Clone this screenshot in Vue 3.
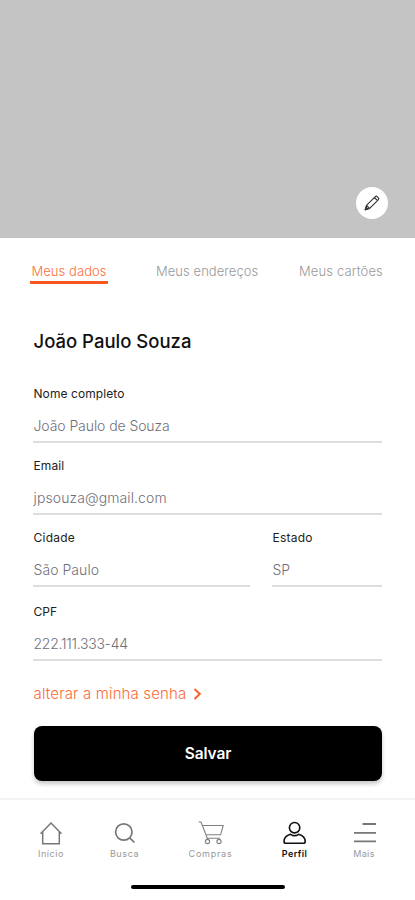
<script setup>
const tabs = [
  { label: 'Meus dados', key: 'dados', active: true },
  { label: 'Meus endereços', key: 'enderecos' },
  { label: 'Meus cartões', key: 'cartoes' },
]

const fields = [
  { key: 'nome', label: 'Nome completo', value: 'João Paulo de Souza' },
  { key: 'email', label: 'Email', value: 'jpsouza@gmail.com' },
  { key: 'cidade', label: 'Cidade', value: 'São Paulo' },
  { key: 'estado', label: 'Estado', value: 'SP' },
  { key: 'cpf', label: 'CPF', value: '222.111.333-44' },
]
</script>

<template>
  <main class="screen">
    <header class="cover">
      <button class="edit" aria-label="Editar foto">
        <svg width="18" height="18" viewBox="0 0 18 18" fill="none" stroke="#333" stroke-width="1.15" stroke-linejoin="round">
          <path d="M2.2 15.8 3.5 11.3 12.3 2.6Q13.2 1.8 14.2 2.6L15.4 3.8Q16.2 4.8 15.4 5.7L6.7 14.4ZM3.5 11.3 6.7 14.4M11.4 3.5 14.5 6.6" />
          <path d="M2.2 15.8 3 13.2 4.8 15Z" fill="#333" />
        </svg>
      </button>
    </header>

    <nav class="tabs">
      <a v-for="t in tabs" :key="t.key" :class="['tab', t.key, { active: t.active }]"><span>{{ t.label }}</span></a>
    </nav>

    <section class="content">
      <h1>João Paulo Souza</h1>
      <div class="form">
        <div v-for="f in fields" :key="f.key" :class="['field', f.key]">
          <label>{{ f.label }}</label>
          <div class="value"><span>{{ f.value }}</span></div>
        </div>
      </div>
      <a class="password">
        <span>alterar a minha senha</span>
        <svg width="9" height="12" viewBox="0 0 9 12" fill="none" stroke="#f9622b" stroke-width="2">
          <path d="M1.5 1 6.8 6 1.5 11" />
        </svg>
      </a>
      <button class="save">Salvar</button>
    </section>

    <footer class="bottom">
      <div class="items">
        <a class="item inicio">
          <svg width="26" height="26" viewBox="0 0 26 26" fill="none" stroke="#777" stroke-width="1.5">
            <path d="M2.5 13.7 13 3 23.5 13.7M4.7 12V23.8H21.3V12" />
          </svg>
          <span>Início</span>
        </a>
        <a class="item busca">
          <svg width="26" height="26" viewBox="0 0 26 26" fill="none" stroke="#777" stroke-width="1.7">
            <circle cx="11.8" cy="12" r="8.2" /><path d="M17.7 17.8 22.5 22.5" />
          </svg>
          <span>Busca</span>
        </a>
        <a class="item compras">
          <svg width="28" height="26" viewBox="0 0 28 26" fill="none" stroke="#808080" stroke-width="1.1">
            <path d="M1.5 2H4L10.3 18.2H23M5.6 5.5H26.2L23.6 14.8H9M10.3 18.2 9.2 20" />
            <circle cx="10.5" cy="21.5" r="2.1" /><circle cx="22" cy="21.5" r="2.1" />
          </svg>
          <span>Compras</span>
        </a>
        <a class="item perfil">
          <svg width="26" height="26" viewBox="0 0 26 26" fill="none" stroke="#111" stroke-width="1.6">
            <circle cx="12.6" cy="7.7" r="5.2" />
            <path d="M8.6 14.3Q2 16.3 2 21.5 2 23.3 3.9 23.3H21.3Q23.2 23.3 23.2 21.5 23.2 16.3 16.6 14.3 12.6 17 8.6 14.3Z" />
          </svg>
          <span>Perfil</span>
        </a>
        <a class="item mais">
          <svg width="26" height="26" viewBox="0 0 26 26" fill="none" stroke="#777" stroke-width="1.8">
            <path d="M11.5 4H25M3 12.8H25M3 21.3H25" />
          </svg>
          <span>Mais</span>
        </a>
      </div>
      <div class="indicator"></div>
    </footer>
  </main>
</template>

<style>
body { background: #fff; }
</style>

<style scoped>
* { box-sizing: border-box; }
.screen { width: 415px; height: 900px; display: flex; flex-direction: column; overflow: hidden; background: #fff; font-family: Inter, "Liberation Sans", sans-serif; color: #111; }
button { border: 0; padding: 0; font-family: inherit; }
span, label, h1 { white-space: nowrap; }
.cover { height: 238px; flex: none; background: #c4c4c4; display: flex; justify-content: flex-end; align-items: flex-end; padding: 0 27px 19px; }
.edit { width: 32px; height: 32px; border-radius: 50%; background: #fff; display: grid; place-items: center; }
.tabs { height: 46px; flex: none; padding: 23px 32px 0 30px; display: flex; }
.tab { height: 23px; line-height: 20px; font-size: 13px; font-weight: 300; color: #999; letter-spacing: .06px; }
.tab.dados { width: 78px; padding-left: 1.5px; }
.tab.active { color: #fa7040; border-bottom: 3px solid #f9561f; border-radius: 1px; }
.tab.enderecos { margin-left: 48px; width: 102px; }
.tab.cartoes { margin-left: 41px; letter-spacing: .13px; }
.content { flex: none; height: 514px; padding: 45px 33px 0; display: flex; flex-direction: column; }
h1 { margin: 0 0 32px; padding-left: .5px; line-height: 24px; font-size: 18.5px; font-weight: 500; letter-spacing: 0; }
.form { display: grid; grid-template-columns: 217px 110px; column-gap: 22px; row-gap: 14px; }
.field { grid-column: 1 / -1; height: 58px; border-bottom: 2px solid #dedede; }
.field.cidade, .field.estado { grid-column: auto; }
.field.cpf { margin-top: 2px; }
label { display: block; padding: 1px 0 0 .5px; line-height: 16px; font-size: 12px; font-weight: 400; color: #222; letter-spacing: .08px; }
.cidade label, .estado label { letter-spacing: .25px; }
.value { margin-top: 14px; padding-left: .5px; line-height: 20px; font-size: 14px; font-weight: 300; color: #70707a; letter-spacing: -.08px; }
.email .value { letter-spacing: .1px; }
.cidade .value { letter-spacing: .06px; }
.cpf .value { letter-spacing: -.27px; }
.password { margin-top: 23px; padding-left: .5px; height: 20px; line-height: 20px; display: flex; align-items: center; gap: 7px; font-size: 15px; font-weight: 300; letter-spacing: .15px; color: #fa6c38; }
.save { margin: 22px 0 0 1px; width: 348px; height: 55px; border-radius: 8px; background: #000; color: #fff; font-size: 15.5px; font-weight: 600; letter-spacing: -.1px; box-shadow: 0 3px 4px rgba(0, 0, 0, .22); }
.bottom { flex: 1; border-top: 2px solid #f3f3f3; display: flex; flex-direction: column; align-items: center; }
.items { width: 100%; height: 85px; padding: 20px 26px 0 24px; display: grid; grid-template-columns: 54px 93px 79px 89px 50px; }
.item { display: flex; flex-direction: column; align-items: center; font-size: 9px; line-height: 12px; letter-spacing: .4px; color: #999; gap: 2px; }
.item.inicio, .item.busca { letter-spacing: .6px; }
.item.compras { letter-spacing: .75px; }
.item.perfil { color: #111; font-weight: 600; }
.indicator { width: 154px; height: 4px; border-radius: 2px; background: #000; }
</style>
